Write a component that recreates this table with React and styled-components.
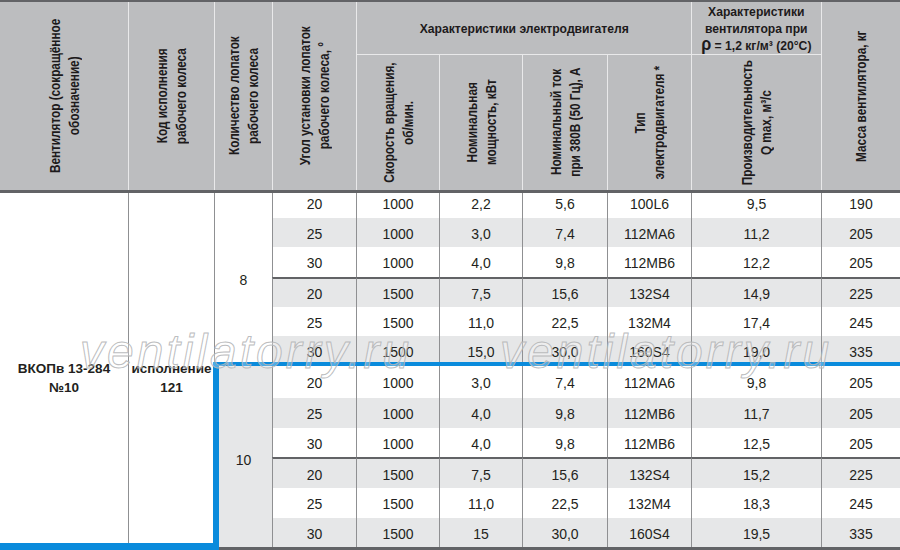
import React from 'react';
import styled, { createGlobalStyle } from 'styled-components';

const COLUMNS = '128px 86px 58px 84px 83px 83px 85px 84px 130px 79px';
const ROWS = '25px 29px 30px 30px 29px 30px 32px 30px 29px 31px 30px 29px';

const rows = [
	[20, 1000, '2,2', '5,6', '100L6', '9,5', 190],
	[25, 1000, '3,0', '7,4', '112MA6', '11,2', 205],
	[30, 1000, '4,0', '9,8', '112MB6', '12,2', 205],
	[20, 1500, '7,5', '15,6', '132S4', '14,9', 225],
	[25, 1500, '11,0', '22,5', '132M4', '17,4', 245],
	[30, 1500, '15,0', '30,0', '160S4', '19,0', 335],
	[20, 1000, '3,0', '7,4', '112MA6', '9,8', 205],
	[25, 1000, '4,0', '9,8', '112MB6', '11,7', 205],
	[30, 1000, '4,0', '9,8', '112MB6', '12,5', 205],
	[20, 1500, '7,5', '15,6', '132S4', '15,2', 225],
	[25, 1500, '11,0', '22,5', '132M4', '18,3', 245],
	[30, 1500, '15', '30,0', '160S4', '19,5', 335],
];

const GlobalStyle = createGlobalStyle`
	html, body {
		margin:0;
		padding:0;
		background:#fff;
	}
	body {
		font-family:"Liberation Sans", Arial, sans-serif;
		color:#231f20;
	}
`;

const Sheet = styled.div`
	position:relative;
	width:900px;
	height:550px;
	overflow:hidden;
	background:#fff;
`;

const Head = styled.div`
	display:grid;
	grid-template-columns:${COLUMNS};
	grid-template-rows:53px 135px;
	background:#bcbdbf;
	border-top:2px solid #626366;
	border-bottom:3px solid #626366;
`;

const HeadCell = styled.div`
	grid-column:${(p) => p.$col};
	grid-row:${(p) => p.$row};
	display:flex;
	align-items:center;
	justify-content:center;
	min-width:0;
	min-height:0;
	border-left:${(p) => (p.$first ? 'none' : '1px solid #e9e9ea')};
	border-bottom:${(p) => (p.$group ? '1px solid #e9e9ea' : 'none')};
	font-weight:700;
	font-size:13.5px;
	color:#1d1a1b;
`;

const VerticalLabel = styled.span`
	writing-mode:vertical-rl;
	transform:rotate(180deg) scaleY(0.84);
	white-space:nowrap;
	text-align:center;
	font-size:14px;
	line-height:18.5px;
`;

const FlatLabel = styled.span`
	display:inline-block;
	transform:scaleX(0.9);
	white-space:nowrap;
	text-align:center;
	line-height:17px;
`;

const Rho = styled.span`
	font-size:18px;
	line-height:10px;
`;

const Body = styled.div`
	display:grid;
	grid-template-columns:${COLUMNS};
	grid-template-rows:${ROWS};
	border-bottom:3px solid #626366;
`;

const TitleCell = styled.div`
	grid-column:${(p) => p.$col};
	grid-row:1 / span 12;
	display:flex;
	flex-direction:column;
	align-items:center;
	justify-content:center;
	padding-top:16px;
	border-left:${(p) => (p.$first ? 'none' : '1px solid #8f9092')};
	font-weight:700;
	font-size:13.5px;
	line-height:19px;
	text-align:center;
`;

const BladeCell = styled.div`
	grid-column:3;
	grid-row:${(p) => p.$row} / span 6;
	display:flex;
	align-items:center;
	justify-content:center;
	padding-top:${(p) => (p.$shade ? 6 : 0)}px;
	border-left:1px solid #8f9092;
	background:${(p) => (p.$shade ? '#e6e7e8' : '#fff')};
	font-size:14px;
`;

const Cell = styled.div`
	box-sizing:border-box;
	display:flex;
	align-items:center;
	justify-content:center;
	padding:${(p) => (p.$lift ? '0 0 4px' : '2px 0 0')};
	border-left:1px solid #8f9092;
	border-top:${(p) => (p.$sep ? '2px solid #626366' : 'none')};
	background:${(p) => (p.$shade ? '#e6e7e8' : '#fff')};
	font-size:14px;
	white-space:nowrap;
`;

const Marker = styled.span`
	position:absolute;
	top:${(p) => p.$top}px;
	left:${(p) => p.$left}px;
	width:${(p) => p.$width}px;
	height:${(p) => p.$height}px;
	background:#0a8bdc;
`;

const Watermark = styled.span`
	position:absolute;
	top:328px;
	left:${(p) => p.$left}px;
	font:italic 400 48px/48px "Liberation Sans", Arial, sans-serif;
	letter-spacing:3px;
	white-space:nowrap;
	color:rgba(255, 255, 255, 0.3);
	-webkit-text-stroke:1px rgba(180, 181, 183, 0.9);
	pointer-events:none;
`;

const App = () => (
	<>
		<GlobalStyle />
		<Sheet>
			<Head>
				<HeadCell $col='1' $row='1 / 3' $first>
					<VerticalLabel>Вентилятор (сокращённое<br />обозначение)</VerticalLabel>
				</HeadCell>
				<HeadCell $col='2' $row='1 / 3'>
					<VerticalLabel>Код исполнения<br />рабочего колеса</VerticalLabel>
				</HeadCell>
				<HeadCell $col='3' $row='1 / 3'>
					<VerticalLabel>Количество лопаток<br />рабочего колеса</VerticalLabel>
				</HeadCell>
				<HeadCell $col='4' $row='1 / 3'>
					<VerticalLabel>Угол установки лопаток<br />рабочего колеса, °</VerticalLabel>
				</HeadCell>
				<HeadCell $col='5 / 9' $row='1' $group>
					<FlatLabel>Характеристики электродвигателя</FlatLabel>
				</HeadCell>
				<HeadCell $col='9' $row='1' $group>
					<FlatLabel>
						Характеристики<br />
						вентилятора при<br />
						<Rho>ρ</Rho> = 1,2 кг/м³ (20°C)
					</FlatLabel>
				</HeadCell>
				<HeadCell $col='10' $row='1 / 3'>
					<VerticalLabel>Масса вентилятора, кг</VerticalLabel>
				</HeadCell>
				<HeadCell $col='5' $row='2'>
					<VerticalLabel>Скорость вращения,<br />об/мин.</VerticalLabel>
				</HeadCell>
				<HeadCell $col='6' $row='2'>
					<VerticalLabel>Номинальная<br />мощность, кВт</VerticalLabel>
				</HeadCell>
				<HeadCell $col='7' $row='2'>
					<VerticalLabel>Номинальный ток<br />при 380В (50 Гц), А</VerticalLabel>
				</HeadCell>
				<HeadCell $col='8' $row='2'>
					<VerticalLabel>Тип<br />электродвигателя *</VerticalLabel>
				</HeadCell>
				<HeadCell $col='9' $row='2'>
					<VerticalLabel>Производительность<br />Q max, м³/с</VerticalLabel>
				</HeadCell>
			</Head>

			<Body>
				<TitleCell $col='1' $first>
					<span>ВКОПв 13-284</span>
					<span>№10</span>
				</TitleCell>
				<TitleCell $col='2'>
					<span>исполнение</span>
					<span>121</span>
				</TitleCell>
				<BladeCell $row='1'>8</BladeCell>
				<BladeCell $row='7' $shade>10</BladeCell>
				{
					rows.map((row, i) => row.map((value, j) => (
						<Cell
							key={`${i}-${j}`}
							$shade={i % 2 === 1}
							$sep={i === 3 || i === 9}
							$lift={i === 0}
						>
							{value}
						</Cell>
					)))
				}
			</Body>

			<Marker $top={362} $left={213} $width={687} $height={4} />
			<Marker $top={362} $left={213} $width={6} $height={188} />
			<Marker $top={543} $left={0} $width={219} $height={7} />

			<Watermark $left={80}>ventilatorry.ru</Watermark>
			<Watermark $left={500}>ventilatorry.ru</Watermark>
		</Sheet>
	</>
);

export default App;
